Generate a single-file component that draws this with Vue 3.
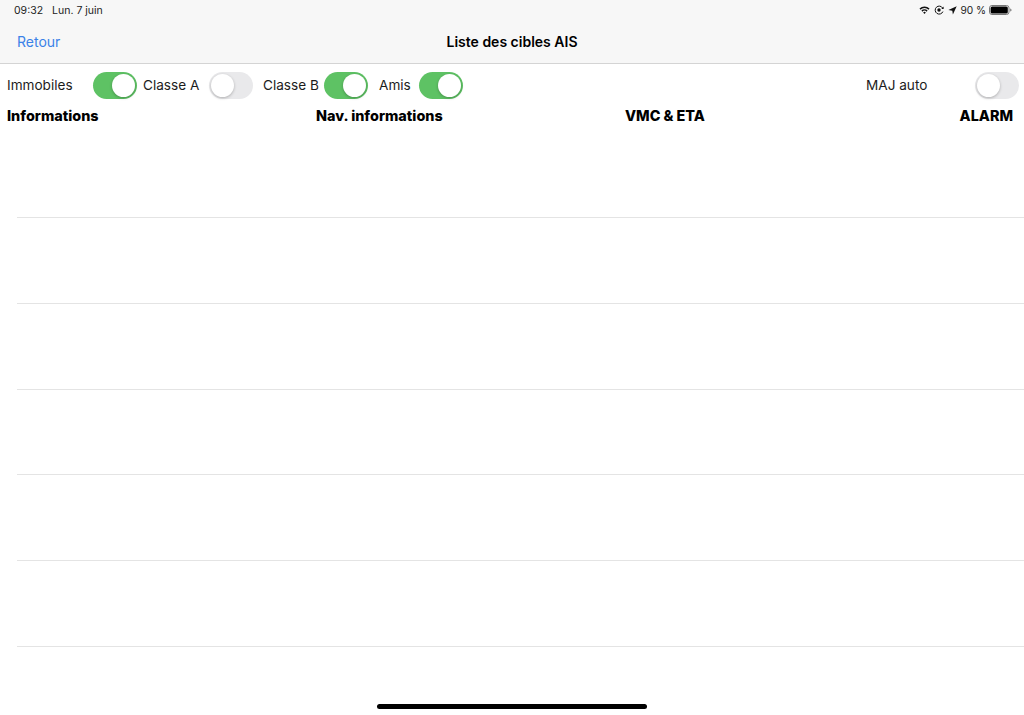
<script setup>
const filters = [
  { label: 'Immobiles', on: true, width: 86, gap: 0 },
  { label: 'Classe A', on: false, width: 66, gap: 6 },
  { label: 'Classe B', on: true, width: 61, gap: 10 },
  { label: 'Amis', on: true, width: 40, gap: 11 },
];
const columns = ['Informations', 'Nav. informations', 'VMC & ETA', 'ALARM'];
const rows = [1, 2, 3, 4, 5, 6];
</script>

<template>
  <div class="screen">
    <header class="nav">
      <div class="status">
        <div class="status-left">
          <span>09:32</span>
          <span>Lun. 7 juin</span>
        </div>
        <div class="status-right">
          <svg width="11" height="8" viewBox="0 0 11 8">
            <path d="M0.5 2.6a7 7 0 0 1 10 0l-1 1.1a5.6 5.6 0 0 0-8 0z" fill="#111" />
            <path d="M2.4 4.6a4.3 4.3 0 0 1 6.2 0l-1 1.1a2.9 2.9 0 0 0-4.2 0z" fill="#111" />
            <path d="M4.2 6.5a1.8 1.8 0 0 1 2.6 0L5.5 8z" fill="#111" />
          </svg>
          <svg width="10" height="10" viewBox="0 0 10 10">
            <path d="M8.9 6.6A4 4 0 1 1 8.6 3" fill="none" stroke="#111" stroke-width="1" />
            <path d="M9.6 1.6v2.3H7.3z" fill="#111" />
            <circle cx="5" cy="5" r="1.7" fill="#111" />
          </svg>
          <svg width="9" height="9" viewBox="0 0 9 9">
            <path d="M8.7 0.3L0.4 4.1l3.9 0.6 0.6 3.9z" fill="#111" />
          </svg>
          <span class="battery-text">90 %</span>
          <svg width="23" height="10" viewBox="0 0 23 10">
            <rect x="0.5" y="0.5" width="19.5" height="9" rx="2.4" fill="none" stroke="#777" />
            <rect x="1.6" y="1.6" width="17.2" height="6.8" rx="1.5" fill="#000" />
            <path d="M21.2 3.4c.9.3 1.3.9 1.3 1.6s-.4 1.3-1.3 1.6z" fill="#777" />
          </svg>
        </div>
      </div>
      <div class="nav-bar">
        <a class="back">Retour</a>
        <h1 class="title">Liste des cibles AIS</h1>
      </div>
    </header>

    <div class="filters">
      <div class="filter-group">
        <div v-for="f in filters" :key="f.label" class="filter" :style="{ marginLeft: f.gap + 'px' }">
          <span class="filter-label" :style="{ width: f.width + 'px' }">{{ f.label }}</span>
          <span class="switch" :class="{ on: f.on }"><i class="knob"></i></span>
        </div>
      </div>
      <div class="filter">
        <span class="filter-label auto-label">MAJ auto</span>
        <span class="switch"><i class="knob"></i></span>
      </div>
    </div>

    <div class="columns">
      <span v-for="c in columns" :key="c" class="col">{{ c }}</span>
    </div>

    <div class="table">
      <div v-for="r in rows" :key="r" class="row"></div>
    </div>

    <div class="home-bar"></div>
  </div>
</template>

<style>
html, body {
  margin: 0;
  background: #fff;
}
</style>

<style scoped>
.screen {
  width: 1024px;
  height: 715px;
  overflow: hidden;
  position: relative;
  background: #fff;
  color: #000;
  font-family: Inter, "Liberation Sans", sans-serif;
}

.nav {
  height: 63px;
  background: #f7f7f7;
  border-bottom: 1px solid #d4d4d4;
}

.status {
  height: 20px;
  padding: 0 12px 0 14px;
  display: flex;
  justify-content: space-between;
  align-items: center;
  font-size: 10.5px;
  color: #222;
}

.status-left {
  display: flex;
  gap: 9px;
}

.status-right {
  display: flex;
  align-items: center;
  gap: 4px;
}

.battery-text {
  font-size: 10.2px;
  margin: 0 -1px;
}

.nav-bar {
  height: 43px;
  position: relative;
  display: flex;
  align-items: center;
  justify-content: center;
}

.back {
  position: absolute;
  left: 17px;
  font-size: 14px;
  color: #3b82e8;
}

.title {
  margin: 0;
  font-size: 14px;
  font-weight: 600;
}

.filters {
  height: 43px;
  padding: 0 5px 0 7px;
  display: flex;
  justify-content: space-between;
  align-items: center;
}

.filter-group {
  display: flex;
}

.filter {
  display: flex;
  align-items: center;
}

.filter-label {
  font-size: 13.6px;
  color: #1c1c1c;
  padding-bottom: 2px;
}

.auto-label {
  width: 109px;
}

.switch {
  width: 44px;
  height: 27px;
  border-radius: 14px;
  background: #e9e9eb;
  position: relative;
  display: block;
}

.switch.on {
  background: #5ec264;
}

.knob {
  position: absolute;
  top: 2px;
  left: 2px;
  width: 23px;
  height: 23px;
  border-radius: 50%;
  background: #fff;
  box-shadow: 0 1px 3px rgba(0, 0, 0, 0.25);
}

.switch.on .knob {
  left: 19px;
}

.columns {
  height: 17px;
  padding: 0 11px 0 7px;
  display: grid;
  grid-template-columns: 309px 309px 1fr auto;
  align-items: center;
}

.col {
  font-size: 14.4px;
  font-weight: 800;
}

.table {
  padding-left: 17px;
  margin-top: 8.2px;
}

.row {
  box-sizing: border-box;
  height: 85.8px;
  border-bottom: 1px solid #e4e4e4;
}

.home-bar {
  position: absolute;
  left: 377px;
  bottom: 6px;
  width: 270px;
  height: 5px;
  border-radius: 3px;
  background: #000;
}
</style>
